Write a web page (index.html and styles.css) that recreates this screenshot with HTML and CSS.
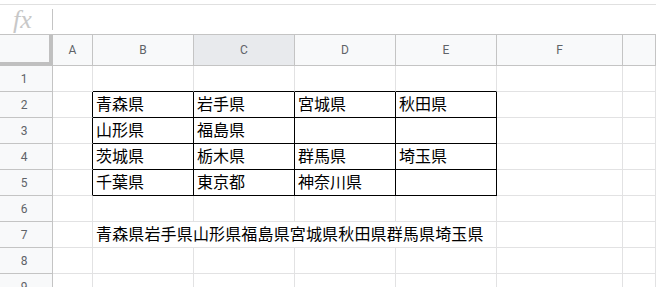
FILE: index.html
```html
<!DOCTYPE html>
<html lang="ja">
<head>
  <meta charset="UTF-8">
  <meta name="viewport" content="width=device-width, initial-scale=1.0">
  <link rel="stylesheet" href="styles.css">
  <title>Sheet</title>
</head>
<body>
  <div class="formula-bar">
    <span class="fx">fx</span>
    <span class="fx-sep"></span>
  </div>

  <div class="sheet">
    <!-- 列見出し -->
    <div class="corner"></div>
    <div class="col-head">A</div>
    <div class="col-head">B</div>
    <div class="col-head sel">C</div>
    <div class="col-head">D</div>
    <div class="col-head">E</div>
    <div class="col-head">F</div>
    <div class="col-head"></div>

    <!-- 1 -->
    <div class="row-head">1</div>
    <div class="cell"></div>
    <div class="cell bb"></div>
    <div class="cell bb"></div>
    <div class="cell bb"></div>
    <div class="cell bb"></div>
    <div class="cell"></div>
    <div class="cell"></div>

    <!-- 2 -->
    <div class="row-head">2</div>
    <div class="cell br"></div>
    <div class="cell bb br">青森県</div>
    <div class="cell bb br">岩手県</div>
    <div class="cell bb br">宮城県</div>
    <div class="cell bb br">秋田県</div>
    <div class="cell"></div>
    <div class="cell"></div>

    <!-- 3 -->
    <div class="row-head">3</div>
    <div class="cell br"></div>
    <div class="cell bb br">山形県</div>
    <div class="cell bb br">福島県</div>
    <div class="cell bb br"></div>
    <div class="cell bb br"></div>
    <div class="cell"></div>
    <div class="cell"></div>

    <!-- 4 -->
    <div class="row-head">4</div>
    <div class="cell br"></div>
    <div class="cell bb br">茨城県</div>
    <div class="cell bb br">栃木県</div>
    <div class="cell bb br">群馬県</div>
    <div class="cell bb br">埼玉県</div>
    <div class="cell"></div>
    <div class="cell"></div>

    <!-- 5 -->
    <div class="row-head">5</div>
    <div class="cell br"></div>
    <div class="cell bb br">千葉県</div>
    <div class="cell bb br">東京都</div>
    <div class="cell bb br">神奈川県</div>
    <div class="cell bb br"></div>
    <div class="cell"></div>
    <div class="cell"></div>

    <!-- 6 -->
    <div class="row-head">6</div>
    <div class="cell"></div>
    <div class="cell"></div>
    <div class="cell"></div>
    <div class="cell"></div>
    <div class="cell"></div>
    <div class="cell"></div>
    <div class="cell"></div>

    <!-- 7: はみ出したテキスト -->
    <div class="row-head">7</div>
    <div class="cell"></div>
    <div class="cell span4">青森県岩手県山形県福島県宮城県秋田県群馬県埼玉県</div>
    <div class="cell"></div>
    <div class="cell"></div>

    <!-- 8 -->
    <div class="row-head">8</div>
    <div class="cell"></div>
    <div class="cell"></div>
    <div class="cell"></div>
    <div class="cell"></div>
    <div class="cell"></div>
    <div class="cell"></div>
    <div class="cell"></div>

    <!-- 9 -->
    <div class="row-head">9</div>
    <div class="cell"></div>
    <div class="cell"></div>
    <div class="cell"></div>
    <div class="cell"></div>
    <div class="cell"></div>
    <div class="cell"></div>
    <div class="cell"></div>
  </div>
</body>
</html>
```

FILE: styles.css
```css
* {
  box-sizing: border-box;
}
body {
  margin: 0;
  width: 656px;
  height: 287px;
  overflow: hidden;
  background-color: #fff;
  font-family: "Liberation Sans", "Noto Sans CJK JP", sans-serif;
}
.formula-bar {
  margin-top: 4px;
  height: 30px;
  border-top: 1px solid #e0e0e0;
  display: flex;
  align-items: center;
}
.fx {
  font-family: "Liberation Serif", serif;
  font-style: italic;
  font-size: 26px;
  color: #c8c8c8;
  width: 52px;
  padding-left: 13px;
  line-height: 28px;
}
.fx-sep {
  width: 1px;
  height: 21px;
  background-color: #c4c4c4;
}
.sheet {
  display: grid;
  grid-template-columns: 53px 40px 101px 101px 101px 101px 126px 1fr;
  grid-auto-rows: 26px;
  grid-template-rows: 31px;
  border-top: 1px solid #c4c4c4;
}
.corner {
  background-color: #f8f9fa;
  border-right: 4px solid #c0c0c0;
  border-bottom: 4px solid #c0c0c0;
}
.col-head {
  background-color: #f8f9fa;
  border-right: 1px solid #c4c4c4;
  border-bottom: 1px solid #c4c4c4;
  color: #5f6368;
  font-family: Roboto, "Liberation Sans", sans-serif;
  font-size: 12px;
  display: flex;
  align-items: center;
  justify-content: center;
}
.col-head.sel {
  background-color: #e8eaed;
}
.row-head {
  background-color: #f8f9fa;
  border-right: 1px solid #c4c4c4;
  border-bottom: 1px solid #c4c4c4;
  color: #5f6368;
  font-family: Roboto, "Liberation Sans", sans-serif;
  font-size: 12px;
  display: flex;
  align-items: center;
  justify-content: center;
  padding-right: 4px;
}
.cell {
  border-right: 1px solid #e2e2e3;
  border-bottom: 1px solid #e2e2e3;
  font-size: 16px;
  line-height: 25px;
  color: #000;
  padding-left: 3px;
  white-space: nowrap;
  overflow: hidden;
}
.cell.bb {
  border-bottom-color: #000;
}
.cell.br {
  border-right-color: #000;
}
.cell.span4 {
  grid-column: span 4;
  letter-spacing: 0.15px;
}
```
